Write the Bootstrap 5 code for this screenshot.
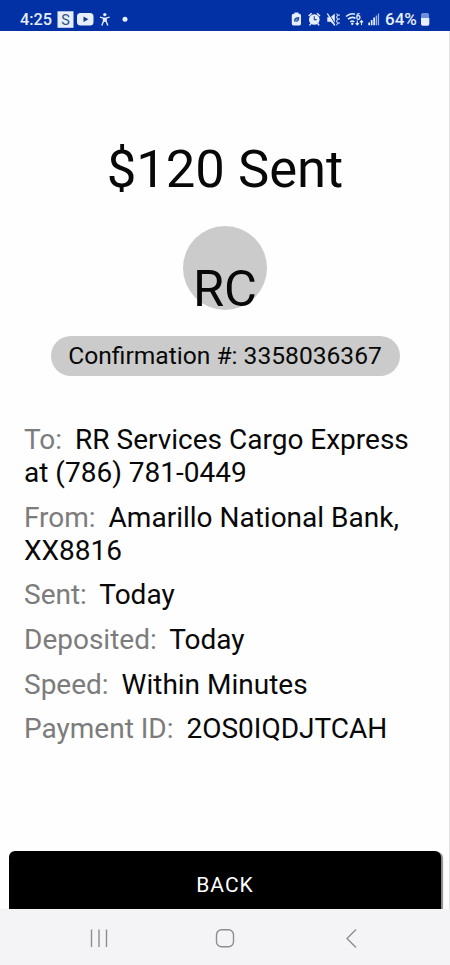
<!DOCTYPE html>
<html lang="en">
<head>
  <meta charset="UTF-8" />
  <meta name="viewport" content="width=device-width, initial-scale=1" />
  <title>Payment Sent</title>
  <link href="https://cdn.jsdelivr.net/npm/bootstrap@5.3.2/dist/css/bootstrap.min.css" rel="stylesheet" />
  <style>
    body {
      font-family: Roboto, "Liberation Sans", sans-serif;
      color: #080808;
      background-color: #fefefe;
      height: 965px;
    }

    .phone {
      height: 965px;
      box-shadow: inset -1px 0 0 #e2e2e2;
    }

    .status-bar {
      height: 31px;
      padding: 7px 0 0 20px;
      background-color: #0231a5;
      color: #e6eefc;
      font-size: 16.3px;
      line-height: 25px;
      font-weight: 500;
    }

    .status-bar svg {
      display: block;
      flex-shrink: 0;
    }

    .clock {
      width: 33px;
    }

    .battery-text {
      width: 33px;
      font-size: 17px;
    }

    .sent-title {
      margin-top: 107px;
      font-size: 52.6px;
      line-height: 62px;
      font-weight: 400;
    }

    .avatar {
      width: 84px;
      height: 84px;
      margin-top: 26px;
      padding-top: 33px;
      background-color: #cbcbcb;
      font-size: 50.5px;
      line-height: 60px;
    }

    .confirm-pill {
      width: 349px;
      height: 40px;
      margin-top: 26px;
      background-color: #cbcbcb;
      font-size: 24.6px;
      line-height: 39px;
    }

    .details {
      margin: 47px 0 0;
      padding: 0 24px;
      font-size: 28px;
      line-height: 33px;
    }

    .details p {
      margin-bottom: 11.7px;
    }

    .details span {
      margin-right: 6px;
      color: #7c7c7c;
    }

    .btn-back {
      height: 58px;
      margin: 0 9px;
      padding: 11px 0 0;
      border: 0;
      border-radius: 6px 6px 0 0;
      background-color: #000;
      color: #fff;
      font-size: 21px;
      line-height: 47px;
      letter-spacing: 1px;
      box-shadow: 2px 1px 1px #8d8988;
    }

    .nav-keys {
      z-index: 1;
      height: 56px;
      background-color: #f4f4f6;
    }
  </style>
</head>
<body>

  <div class="phone d-flex flex-column overflow-hidden">

    <div class="status-bar d-flex flex-shrink-0">
      <span class="clock">4:25</span>
      <!-- notification icons -->
      <svg width="83" height="24" viewBox="53 7 83 24">
        <rect x="57.500" y="11.300" width="16" height="16.500" fill="#e6eefc" />
        <text x="65.500" y="24.800" font-size="14.500" font-weight="400" text-anchor="middle" fill="#33507f">S</text>
        <rect x="77" y="13" width="16.500" height="12.500" rx="3.500" fill="#e6eefc" />
        <path d="M83.500 16.500v5.400l4.800-2.700z" fill="#173783" />
        <circle cx="104.800" cy="14.600" r="1.700" fill="#e6eefc" />
        <path d="M100 17.200l3.500 1v3l-1.700 4.200M109.600 17.200l-3.500 1v3l1.700 4.200" fill="none" stroke="#e6eefc" stroke-width="1.400" />
        <path d="M103.300 17.600h3v4.200h-3z" fill="#e6eefc" />
        <circle cx="125" cy="19.300" r="2.500" fill="#e6eefc" />
      </svg>
      <!-- battery care, alarm, vibrate, wifi and signal -->
      <svg class="ms-auto" width="95" height="24" viewBox="290 7 95 24">
        <path d="M293.500 13.800h1v-1.300h4v1.300h.8q1.700 0 1.700 1.700v8.300q0 1.700-1.700 1.700h-5.800q-1.700 0-1.700-1.700v-8.300q0-1.700 1.700-1.700z" fill="#e6eefc" />
        <path d="M294 21.800c-.3-4 2-4.500 5.300-4.700c.2 4-1.600 5.500-5.300 4.700z" fill="#2750a8" />
        <path d="M294 22.500l3.500-3.400" stroke="#e6eefc" stroke-width=".800" />
        <circle cx="314.300" cy="19.500" r="5.300" fill="#e6eefc" />
        <path d="M308.700 16l3-2.700M320 16l-3-2.700M311 23.500l-1.400 1.900M317.700 23.500l1.400 1.900" stroke="#e6eefc" stroke-width="1.500" />
        <path d="M314.300 16.300v3.400h2.500" stroke="#2750a8" stroke-width="1.200" fill="none" />
        <path d="M327.300 17.300h3.200l4.300-3.800v12l-4.300-3.800h-3.200z" fill="#e6eefc" />
        <path d="M328.500 13.300l7.500 12" stroke="#0231a5" stroke-width="1" />
        <path d="M327.300 13.500l7.500 12" stroke="#e6eefc" stroke-width="1.400" />
        <path d="M336.500 13.500l1.200 1.700l-1.200 2l1.200 2l-1.200 2l1.200 2l-1.200 2M339 14v2M339 18v2M339 22v2" stroke="#c5d5f5" stroke-width="1.100" fill="none" />
        <path d="M346 16.500q4.700-4.200 9-2.200M348 19.200q4-3.200 7.500-.8M350.300 21.800q2-1.600 4 0" stroke="#e6eefc" stroke-width="1.500" fill="none" />
        <circle cx="352.300" cy="23.700" r="1.200" fill="#e6eefc" />
        <text x="355.800" y="19.500" font-size="8.500" font-weight="700" fill="#e6eefc">6</text>
        <path d="M357.300 20.500v4.300M355.700 23.200l1.600 1.800l1.600-1.800M361.500 25v-4.300M359.900 22.300l1.600-1.800l1.600 1.800" stroke="#e6eefc" stroke-width="1.100" fill="none" />
        <path d="M368.300 22.500h1.700v2.700h-1.700zM370.800 20h1.700v5.200h-1.700zM373.300 17.500h1.700v7.700h-1.700z" fill="#e6eefc" />
        <path d="M375.700 15.500h1.500v9.700h-1.500zM377.900 13.500h1.200v11.700h-1.200z" fill="#9db4e6" />
      </svg>
      <span class="battery-text">64%</span>
      <svg width="32" height="24" viewBox="418 7 32 24">
        <path d="M423 13h4.500q1.500 0 1.500 1.500v4h-8v-4q0-1.500 2-1.500z" fill="#6f8fd6" />
        <path d="M421 18h8.300v6q0 1.700-1.700 1.700h-4.900q-1.700 0-1.700-1.700z" fill="#e6eefc" />
      </svg>
    </div>

    <h1 class="sent-title text-center mb-0">$120 Sent</h1>
    <div class="avatar rounded-circle text-center align-self-center">RC</div>
    <div class="confirm-pill rounded-pill text-center align-self-center">Confirmation #: 3358036367</div>

    <div class="details">
      <p><span>To:</span> RR Services Cargo Express at (786) 781-0449</p>
      <p><span>From:</span> Amarillo National Bank, XX8816</p>
      <p><span>Sent:</span> Today</p>
      <p><span>Deposited:</span> Today</p>
      <p><span>Speed:</span> Within Minutes</p>
      <p><span>Payment ID:</span> 2OS0IQDJTCAH</p>
    </div>

    <button type="button" class="btn btn-back mt-auto">BACK</button>

    <div class="nav-keys d-flex flex-shrink-0">
      <svg width="449" height="56" viewBox="0 909 449 56" fill="none" stroke="#8e8e90" stroke-width="1.400">
        <path d="M91.500 929.500v17.500M99 929.500v17.500M106.500 929.500v17.500" />
        <rect x="216.500" y="929.700" width="17" height="17" rx="5" />
        <path d="M356 929.500l-9 9l9 9" />
      </svg>
    </div>

  </div>

  <script src="https://cdn.jsdelivr.net/npm/bootstrap@5.3.2/dist/js/bootstrap.bundle.min.js"></script>
</body>
</html>
